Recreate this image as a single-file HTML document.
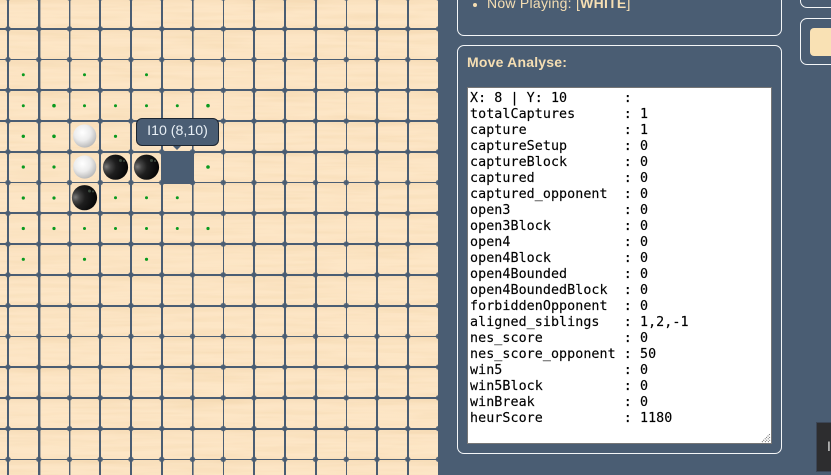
<!DOCTYPE html>
<html><head><meta charset="utf-8"><style>
html,body{margin:0;padding:0}
body{width:831px;height:475px;overflow:hidden;background:#4a5d73;position:relative;font-family:"Liberation Sans",sans-serif}
.abs{position:absolute}
.panel{position:absolute;border:1px solid #f4f6f8;border-radius:7px;box-sizing:border-box}
pre{margin:0;font:13.33px/16px "DejaVu Sans Mono","Liberation Mono",monospace;letter-spacing:.07px;color:#000;-webkit-text-stroke:.15px #000}
</style></head><body>
<svg class="abs" style="left:0;top:0" width="438" height="475" viewBox="0 0 438 475">
<defs>
<filter id="w" x="0" y="0" width="100%" height="100%"><feTurbulence type="fractalNoise" baseFrequency="0.012 0.2" numOctaves="3" seed="4"/><feColorMatrix values="0 0 0 0 .85  0 0 0 0 .62  0 0 0 0 .34  .6 0 0 0 -.24"/></filter>
<linearGradient id="c" x1="0" y1="0" x2="0" y2="1"><stop offset="0" stop-color="#e2bd8b" stop-opacity=".2"/><stop offset=".25" stop-color="#e2bd8b" stop-opacity=".02"/><stop offset=".8" stop-color="#e2bd8b" stop-opacity="0"/><stop offset="1" stop-color="#e2bd8b" stop-opacity=".1"/></linearGradient>
<pattern id="cell" x="8" y="29" width="30.75" height="30.75" patternUnits="userSpaceOnUse"><rect width="31" height="31" fill="url(#c)"/></pattern>
<pattern id="n" x="4.6" y="25.4" width="30.75" height="30.75" patternUnits="userSpaceOnUse"><circle cx="3.4" cy="3.4" r="2.7" fill="#4a5d73" fill-opacity=".92"/></pattern>
<radialGradient id="bk" cx=".14" cy=".48" r=".85"><stop offset="0" stop-color="#7a7a7a"/><stop offset=".2" stop-color="#444"/><stop offset=".45" stop-color="#1e1e1e"/><stop offset="1" stop-color="#050505"/></radialGradient>
<radialGradient id="wh" cx=".4" cy=".35" r=".7"><stop offset="0" stop-color="#fff"/><stop offset=".5" stop-color="#ececec"/><stop offset="1" stop-color="#b4b4b4"/></radialGradient>
</defs>
<rect width="438" height="475" fill="#fde6c6"/>
<rect width="438" height="475" filter="url(#w)"/>
<rect width="438" height="475" fill="url(#cell)"/>
<g fill="#4a5d73">
<rect x="7" width="2" height="475"/><rect x="38" width="2.4" height="475"/><rect x="69" width="1.4" height="475"/><rect x="99" width="2" height="475"/><rect x="130" width="2" height="475"/><rect x="161" width="2" height="475"/><rect x="192" width="1.6" height="475"/><rect x="223" width="1" height="475"/><rect x="253" width="2" height="475"/><rect x="284" width="2" height="475"/><rect x="315" width="2" height="475"/><rect x="346" width="1" height="475"/><rect x="376" width="2" height="475"/><rect x="407" width="2" height="475"/>
<rect y="28" width="438" height="2"/><rect y="59" width="438" height="1"/><rect y="89" width="438" height="2"/><rect y="120" width="438" height="2"/><rect y="151" width="438" height="2"/><rect y="182" width="438" height="1"/><rect y="212" width="438" height="2"/><rect y="243" width="438" height="2"/><rect y="274" width="438" height="2"/><rect y="305" width="438" height="2"/><rect y="336" width="438" height="1"/><rect y="366" width="438" height="2"/><rect y="397" width="438" height="2"/><rect y="428" width="438" height="2"/><rect y="459" width="438" height="1"/>
</g>
<rect width="438" height="475" fill="url(#n)"/>
<rect x="162" y="152" width="32" height="32" fill="#4a5d73"/>
<g fill="#0a9a1e">
<circle cx="23.300" cy="74.700" r="1.500"/><circle cx="84.500" cy="74.700" r="1.500"/><circle cx="146.500" cy="74.700" r="1.500"/>
<circle cx="23.300" cy="105.700" r="1.500"/><circle cx="54" cy="105.700" r="1.800"/><circle cx="84.500" cy="105.700" r="1.500"/><circle cx="115.500" cy="105.700" r="1.500"/><circle cx="146.500" cy="105.700" r="1.500"/><circle cx="177.300" cy="105.700" r="1.500"/><circle cx="208" cy="105.700" r="1.800"/>
<circle cx="23.300" cy="136.300" r="1.700"/><circle cx="54" cy="136.300" r="1.800"/><circle cx="115.500" cy="136.300" r="1.600"/>
<circle cx="23.300" cy="167" r="1.600"/><circle cx="54" cy="167" r="1.600"/><circle cx="208" cy="167" r="1.800"/>
<circle cx="23.300" cy="198" r="1.600"/><circle cx="54" cy="198" r="1.600"/><circle cx="115.500" cy="197.700" r="1.500"/><circle cx="146.500" cy="197.700" r="1.500"/><circle cx="177.300" cy="197.700" r="1.500"/>
<circle cx="23.300" cy="228.500" r="1.600"/><circle cx="54" cy="228.500" r="1.600"/><circle cx="84.500" cy="228.500" r="1.500"/><circle cx="115.500" cy="228.500" r="1.500"/><circle cx="146.500" cy="228.500" r="1.500"/><circle cx="177.300" cy="228.500" r="1.500"/><circle cx="208" cy="228.500" r="1.600"/>
<circle cx="23.300" cy="259.300" r="1.600"/><circle cx="84.500" cy="259.300" r="1.600"/><circle cx="146.500" cy="259.300" r="1.600"/>
</g>
<circle cx="84.700" cy="136" r="11.600" fill="url(#wh)"/><circle cx="84.700" cy="167" r="11.600" fill="url(#wh)"/>
<circle cx="115.500" cy="167.200" r="12.600" fill="url(#bk)"/><circle cx="146.500" cy="167.200" r="12.600" fill="url(#bk)"/><circle cx="84.500" cy="197.700" r="12.600" fill="url(#bk)"/>
<g fill="#3c4a3e"><circle cx="120.500" cy="160.500" r="1.500"/><circle cx="124" cy="161" r="1"/><circle cx="151.500" cy="160.500" r="1.500"/><circle cx="155" cy="161" r="1"/><circle cx="89.500" cy="191" r="1.500"/><circle cx="93" cy="191.500" r="1"/></g>
</svg>
<div class="abs" style="left:136px;top:118px;width:83px;height:28px;box-sizing:border-box;background:#4a5d73;border:1px solid #1c2530;border-radius:6px;color:#e8eff5;font-size:14.2px;line-height:25px;text-align:center">I10 (8,10)</div>
<div class="abs" style="left:173px;top:146px;width:0;height:0;border:4px solid transparent;border-top:4px solid #4a5d73"></div>
<div class="panel" style="left:457px;top:-40px;width:325px;height:76px"></div>
<div class="abs" style="left:473px;top:3px;width:4px;height:4px;border-radius:50%;background:#f5deb3"></div>
<div class="abs" style="left:487px;top:-5px;font-size:14px;line-height:16px;color:#f5deb3;white-space:nowrap;letter-spacing:.26px">Now Playing: [<b>WHITE</b>]</div>
<div class="panel" style="left:457px;top:45px;width:325px;height:409px"></div>
<div class="abs" style="left:467px;top:54px;font-size:14px;line-height:17px;font-weight:bold;color:#f5deb3;white-space:nowrap;letter-spacing:.2px">Move Analyse:</div>
<div class="abs" style="left:467px;top:87px;width:305px;height:357px;box-sizing:border-box;background:#fff;border:1px solid #767676;padding:3px 2px 0;overflow:hidden">
<pre>X: 8 | Y: 10       : 
totalCaptures      : 1
capture            : 1
captureSetup       : 0
captureBlock       : 0
captured           : 0
captured_opponent  : 0
open3              : 0
open3Block         : 0
open4              : 0
open4Block         : 0
open4Bounded       : 0
open4BoundedBlock  : 0
forbiddenOpponent  : 0
aligned_siblings   : 1,2,-1
nes_score          : 0
nes_score_opponent : 50
win5               : 0
win5Block          : 0
winBreak           : 0
heurScore          : 1180</pre>
<svg class="abs" style="right:0;bottom:0" width="11" height="11"><path d="M2 10 L10 2 M5 10 L10 5 M8 10 L10 8" stroke="#666" stroke-width="1" stroke-dasharray="1 1"/></svg>
</div>
<div class="panel" style="left:800px;top:-40px;width:60px;height:48px"></div>
<div class="panel" style="left:800px;top:18px;width:60px;height:47px"></div>
<div class="abs" style="left:810px;top:28px;width:40px;height:28px;background:#f9e1b4;border-radius:4px"></div>
<div class="abs" style="left:816px;top:422px;width:30px;height:50px;box-sizing:border-box;background:#2d2d2f;border:1px solid #3c4656;color:#ddd;font-size:14px;line-height:47px;padding-left:10px">I</div>
</body></html>
